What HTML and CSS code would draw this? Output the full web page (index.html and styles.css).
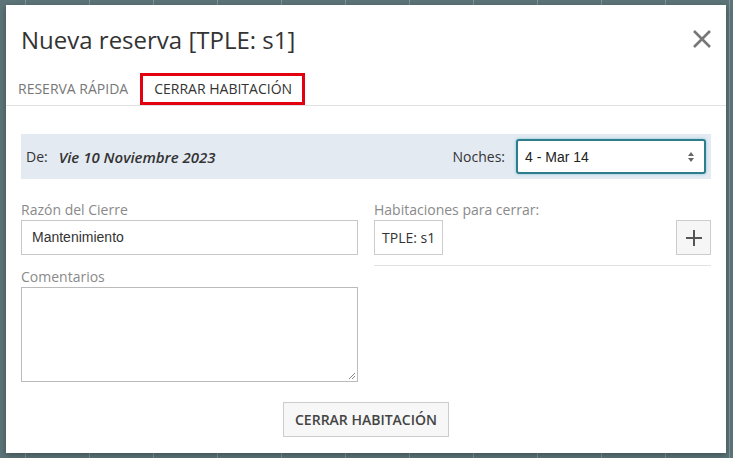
FILE: index.html
```html
<!DOCTYPE html>
<html lang="es">
<head>
    <meta charset="UTF-8">
    <title>Nueva reserva</title>
    <link rel="stylesheet" href="styles.css">
</head>
<body>
    <div class="modal">
        <div class="modal-header">
            <h1>Nueva reserva [TPLE: s1]</h1>
            <span class="close">
                <svg width="20" height="20" viewBox="0 0 20 20"><path d="M2 2 L18 18 M18 2 L2 18" stroke="#777" stroke-width="2.6" fill="none"/></svg>
            </span>
        </div>

        <!-- Tabs -->
        <div class="tabs">
            <a class="tab">RESERVA RÁPIDA</a>
            <a class="tab active">CERRAR HABITACIÓN</a>
        </div>

        <div class="modal-body">
            <div class="date-bar">
                <span class="from-label">De:</span>
                <span class="from-date">Vie 10 Noviembre 2023</span>
                <span class="nights-label">Noches:</span>
                <div class="select">
                    <span>4 - Mar 14</span>
                    <svg width="8" height="12" viewBox="0 0 8 12"><path d="M1 5 L4 1 L7 5 Z M1 7 L4 11 L7 7 Z" fill="#666"/></svg>
                </div>
            </div>

            <div class="columns">
                <div class="col">
                    <label>Razón del Cierre</label>
                    <div class="input">Mantenimiento</div>
                    <label>Comentarios</label>
                    <div class="textarea">
                        <svg class="grip" width="8" height="8" viewBox="0 0 8 8"><path d="M7 1 L1 7 M7 4 L4 7" stroke="#888" stroke-width="1"/></svg>
                    </div>
                </div>
                <div class="col">
                    <label>Habitaciones para cerrar:</label>
                    <div class="rooms">
                        <span class="chip">TPLE: s1</span>
                        <span class="add">
                            <svg width="18" height="18" viewBox="0 0 18 18"><path d="M9 1 V17 M1 9 H17" stroke="#555" stroke-width="2"/></svg>
                        </span>
                    </div>
                </div>
            </div>

            <div class="actions">
                <button>CERRAR HABITACIÓN</button>
            </div>
        </div>
    </div>
</body>
</html>
```

FILE: styles.css
```css
html, body {
    margin: 0;
    height: 100%;
}
body {
    font-family: "Open Sans", Arial, sans-serif;
    background-color: #5c7378;
    background-image: repeating-linear-gradient(90deg, transparent 0, transparent 25px, #7d9398 25px, #7d9398 26px, transparent 26px, transparent 64px);
    padding: 5px 7px 5px 6px;
    box-sizing: border-box;
    overflow: hidden;
}
.modal {
    background: #fff;
    height: 448px;
    box-shadow: 0 2px 6px rgba(0, 0, 0, 0.3);
}
.modal-header {
    display: flex;
    justify-content: space-between;
    align-items: flex-start;
    padding: 20px 14px 0 15px;
}
h1 {
    margin: 0;
    font-size: 24px;
    font-weight: 400;
    color: #333;
    line-height: 30px;
}
.close {
    margin-top: 4px;
}
.tabs {
    display: flex;
    margin-top: 18px;
    padding-left: 0;
    border-bottom: 1px solid #e2e2e2;
    height: 32px;
}
.tab {
    font-size: 14px;
    color: #777;
    padding: 0 12px;
    line-height: 31px;
}
.tab.active {
    color: #333;
    padding: 0 10px 0 11px;
    line-height: 26px;
    border: 3px solid #e3000f;
}
.modal-body {
    padding: 28px 15px 0 15px;
}
.date-bar {
    display: flex;
    align-items: center;
    height: 45px;
    background: #e4eaf2;
    padding: 0 5px;
    font-size: 14px;
    color: #333;
}
.from-date {
    margin-left: 11px;
    font-size: 15px;
    font-weight: 600;
    font-style: italic;
}
.nights-label {
    margin-left: auto;
    margin-right: 11px;
}
.select {
    width: 170px;
    height: 31px;
    border: 2px solid #2e7d8c;
    border-radius: 3px;
    box-shadow: 0 0 3px #7ac3d4;
    display: flex;
    align-items: center;
    justify-content: space-between;
    padding: 0 9px 0 7px;
    font-family: "Liberation Sans", Arial, sans-serif;
    font-size: 14px;
    color: #222;
    background: #fff;
}
.columns {
    display: flex;
    gap: 16px;
    margin-top: 21px;
}
.col {
    flex: 1;
}
label {
    display: block;
    font-size: 14px;
    color: #8a8a8a;
    line-height: 20px;
}
.input {
    height: 33px;
    border: 1px solid #c8c8c8;
    box-sizing: content-box;
    padding-left: 10px;
    line-height: 33px;
    font-family: "Liberation Sans", Arial, sans-serif;
    font-size: 14px;
    color: #333;
    margin-bottom: 12px;
}
.textarea {
    height: 93px;
    border: 1px solid #bbb;
    position: relative;
}
.grip {
    position: absolute;
    right: 1px;
    bottom: 1px;
}
.rooms {
    display: flex;
    justify-content: space-between;
    padding-bottom: 10px;
    border-bottom: 1px solid #e2e2e2;
}
.chip {
    border: 1px solid #ccc;
    height: 33px;
    line-height: 33px;
    padding: 0 7px;
    font-size: 14px;
    color: #333;
}
.add {
    width: 33px;
    height: 33px;
    border: 1px solid #ccc;
    background: #f6f6f6;
    display: flex;
    align-items: center;
    justify-content: center;
}
.actions {
    text-align: center;
    margin-top: 20px;
}
button {
    font-family: "Open Sans", Arial, sans-serif;
    font-size: 14px;
    font-weight: 600;
    color: #444;
    background: #f7f7f7;
    border: 1px solid #ccc;
    height: 35px;
    padding: 0 11px;
}
```
